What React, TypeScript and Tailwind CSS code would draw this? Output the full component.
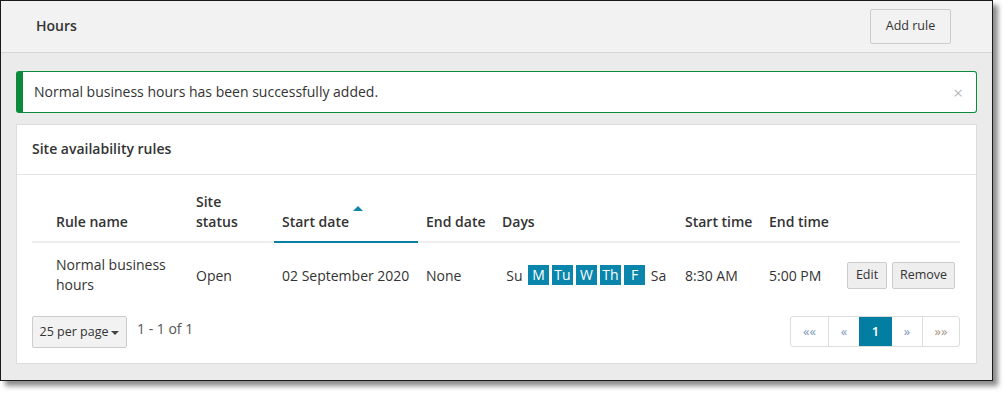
import React from 'react';

// Hours page: header bar, success alert, rules table card
const DAYS = [
  { label: 'Su', on: false },
  { label: 'M', on: true },
  { label: 'Tu', on: true },
  { label: 'W', on: true },
  { label: 'Th', on: true },
  { label: 'F', on: true },
  { label: 'Sa', on: false },
];

const PAGES = ['««', '«', '1', '»', '»»'];

export default function App() {
  return (
    <div
      className="w-[1007px] h-[395px] bg-white text-[#333]"
      style={{ fontFamily: '"Open Sans", "Liberation Sans", sans-serif' }}
    >
      <div className="w-[993px] h-[381px] border border-[#1a1a1a] bg-[#ebebeb] shadow-[5px_5px_5px_rgba(0,0,0,0.45)] overflow-hidden">
        {/* Header */}
        <div className="h-[52px] bg-[#f2f2f2] border-b border-[#d4d4d4] flex items-center justify-between pl-[35px] pr-[41px]">
          <h1 className="text-[14px] font-semibold -mt-[3px]">Hours</h1>
          <button className="h-[35px] w-[81px] -mt-[1px] bg-[#f2f2f2] border border-[#cccccc] rounded-[2px] text-[12.5px] text-[#333]">
            Add rule
          </button>
        </div>

        <div className="px-[15px] pt-[18px]">
          {/* Alert */}
          <div className="h-[42px] bg-white border border-[#0b8a3c] border-l-[7px] rounded-[3px] flex items-center justify-between pl-[11px] pr-[13px]">
            <span className="text-[14px] -mt-[2px]">Normal business hours has been successfully added.</span>
            <span className="text-[#bbbbbb] text-[17px] leading-none">×</span>
          </div>

          {/* Card */}
          <div className="mt-[11px] bg-white border border-[#dddddd]">
            <div className="h-[50px] flex items-center px-[15px] border-b border-[#e6e6e6]">
              <h2 className="text-[14px] font-semibold -mt-[2px]">Site availability rules</h2>
            </div>

            <div className="px-[15px] pb-[15px]">
              <table className="table-fixed w-[928px] text-[14px] border-collapse">
                <colgroup>
                  <col className="w-[156px]" />
                  <col className="w-[86px]" />
                  <col className="w-[144px]" />
                  <col className="w-[76px]" />
                  <col className="w-[183px]" />
                  <col className="w-[84px]" />
                  <col className="w-[78px]" />
                  <col className="w-[121px]" />
                </colgroup>
                <thead>
                  <tr className="h-[67px] align-bottom text-left font-semibold">
                    <th className="font-semibold pl-[24px] pb-[9px] leading-[20px] border-b-2 border-[#eeeeee]">Rule name</th>
                    <th className="font-semibold px-[8px] pb-[9px] leading-[20px] border-b-2 border-[#eeeeee]">
                      Site
                      <br />
                      status
                    </th>
                    <th className="font-semibold px-[8px] pb-[9px] leading-[20px] border-b-2 border-[#0a7ea3]">
                      <span className="relative">
                        Start date
                        <span className="absolute -right-[14px] top-[-6px] w-0 h-0 border-l-[5px] border-r-[5px] border-b-[5px] border-l-transparent border-r-transparent border-b-[#1583a8]" />
                      </span>
                    </th>
                    <th className="font-semibold px-[8px] pb-[9px] leading-[20px] border-b-2 border-[#eeeeee]">End date</th>
                    <th className="font-semibold px-[8px] pb-[9px] leading-[20px] border-b-2 border-[#eeeeee]">Days</th>
                    <th className="font-semibold px-[8px] pb-[9px] leading-[20px] border-b-2 border-[#eeeeee]">Start time</th>
                    <th className="font-semibold px-[8px] pb-[9px] leading-[20px] border-b-2 border-[#eeeeee]">End time</th>
                    <th className="pb-[9px] border-b-2 border-[#eeeeee]" />
                  </tr>
                </thead>
                <tbody>
                  <tr className="align-middle">
                    <td className="pl-[24px] pr-[8px] pt-[12px] pb-[12px] leading-[20px]">Normal business hours</td>
                    <td className="px-[8px]">Open</td>
                    <td className="px-[8px] whitespace-nowrap">02 September 2020</td>
                    <td className="px-[8px]">None</td>
                    <td className="px-[8px]">
                      <div className="flex items-center gap-[3px] ml-[2px]">
                        {DAYS.map((d) =>
                          d.on ? (
                            <span
                              key={d.label}
                              className="w-[21px] h-[20px] bg-[#0a86ad] text-white flex items-center justify-center leading-none"
                            >
                              {d.label}
                            </span>
                          ) : (
                            <span key={d.label} className="w-[21px] text-center">
                              {d.label}
                            </span>
                          )
                        )}
                      </div>
                    </td>
                    <td className="px-[8px] whitespace-nowrap">8:30 AM</td>
                    <td className="px-[8px] whitespace-nowrap">5:00 PM</td>
                    <td className="pl-[8px]">
                      <div className="flex gap-[5px]">
                        <button className="h-[27px] w-[40px] bg-[#eeeeee] border border-[#cccccc] rounded-[2px] text-[12.5px] text-[#333]">
                          Edit
                        </button>
                        <button className="h-[27px] w-[63px] bg-[#eeeeee] border border-[#cccccc] rounded-[2px] text-[12.5px] text-[#333]">
                          Remove
                        </button>
                      </div>
                    </td>
                  </tr>
                </tbody>
              </table>

              {/* Footer: page size + pagination */}
              <div className="mt-[9px] flex items-start justify-between">
                <div className="flex items-start gap-[10px]">
                  <button className="h-[32px] w-[95px] bg-[#f2f2f2] border border-[#cccccc] rounded-[2px] text-[12.5px] text-[#333] flex items-center justify-center gap-[3px]">
                    25 per page
                    <span className="w-0 h-0 border-l-[4px] border-r-[4px] border-t-[4px] border-l-transparent border-r-transparent border-t-[#444] mt-[1px]" />
                  </button>
                  <span className="text-[14px] text-[#555] leading-[20px] pt-[3px]">1 - 1 of 1</span>
                </div>
                <div className="flex h-[31px] border border-[#dddddd] rounded-[3px] overflow-hidden mr-[1px]">
                  {PAGES.map((p, i) => (
                    <span
                      key={i}
                      className={
                        p === '1'
                          ? 'w-[33px] bg-[#037ea3] text-white text-[13px] font-semibold flex items-center justify-center'
                          : i === 0
                          ? 'w-[37px] text-[#7d98b8] text-[13px] flex items-center justify-center'
                          : i === 1
                          ? 'w-[31px] text-[#7d98b8] text-[13px] border-l border-[#dddddd] flex items-center justify-center'
                          : i === 3
                          ? 'w-[30px] text-[#7d98b8] text-[13px] flex items-center justify-center'
                          : 'w-[37px] text-[#a89483] text-[13px] border-l border-[#dddddd] flex items-center justify-center'
                      }
                    >
                      {p}
                    </span>
                  ))}
                </div>
              </div>
            </div>
          </div>
        </div>
      </div>
    </div>
  );
}
